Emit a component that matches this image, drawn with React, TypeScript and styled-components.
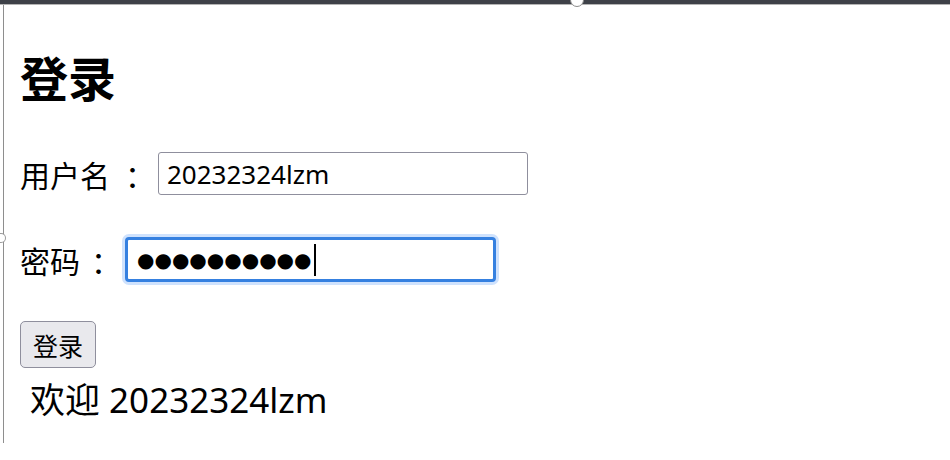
import React from "react"
import styled, { createGlobalStyle } from "styled-components"

const GlobalStyle = createGlobalStyle`
  html, body {
    margin: 0;
    padding: 0;
    background: #ffffff;
  }
  body {
    font-family: "Noto Sans", "Noto Sans CJK SC", sans-serif;
    color: #000000;
  }
`

const App = () => {
  return (
    <>
      <GlobalStyle />
      <TopBar>
        <ResizeKnob />
      </TopBar>
      <Frame>
        <SideKnob />
        <Title>登录</Title>
        <Row $top={44}>
          <Label>
            用户名<Colon $gap={15}>：</Colon>
          </Label>
          <TextBox readOnly value="20232324lzm" />
        </Row>
        <Row $top={42}>
          <Label>
            密码<Colon $gap={11}>：</Colon>
          </Label>
          <FocusBox>
            <Dots>●●●●●●●●●●</Dots>
            <Caret />
          </FocusBox>
        </Row>
        <SubmitButton type="button">登录</SubmitButton>
        <Welcome>欢迎 20232324lzm</Welcome>
      </Frame>
    </>
  )
}

export default App

const TopBar = styled.div`
  position: relative;
  height: 4px;
  background: #3e4148;
  border-bottom: 1px solid #b4b4b4;
`

const ResizeKnob = styled.div`
  position: absolute;
  left: 570px;
  top: -7px;
  width: 12px;
  height: 12px;
  border-radius: 50%;
  background: #ffffff;
  border: 1px solid #8c8c8c;
`

const Frame = styled.div`
  position: relative;
  margin-left: 3px;
  height: 438px;
  border-left: 1.5px solid #8e8e8e;
  padding-left: 16px;
  display: flex;
  flex-direction: column;
  align-items: flex-start;
`

const SideKnob = styled.div`
  position: absolute;
  left: -5px;
  top: 228px;
  width: 6px;
  height: 8px;
  border-radius: 0 5px 5px 0;
  border: 1px solid #9a9a9a;
  border-left: none;
  background: #ffffff;
`

const Title = styled.h1`
  margin: 39px 0 0 0;
  font-family: "Noto Sans CJK SC", sans-serif;
  font-size: 48px;
  font-weight: 700;
  line-height: 64px;
`

const Row = styled.div<{ $top: number }>`
  display: flex;
  align-items: center;
  margin-top: ${(p) => p.$top}px;
`

const Label = styled.span`
  display: flex;
  font-family: "Noto Sans CJK SC", sans-serif;
  font-size: 30px;
  line-height: 42px;
`

const Colon = styled.span<{ $gap: number }>`
  margin-left: ${(p) => p.$gap}px;
`

const TextBox = styled.input`
  box-sizing: border-box;
  margin-left: 3px;
  width: 370px;
  height: 43px;
  padding: 0 8px;
  border: 1.5px solid #8f8f9d;
  border-radius: 3px;
  font-family: "Noto Sans", "Noto Sans CJK SC", sans-serif;
  font-size: 26px;
  color: #000000;
  background: #ffffff;
  outline: none;
`

const FocusBox = styled.div`
  box-sizing: border-box;
  margin-left: 4px;
  width: 371px;
  height: 45px;
  padding: 0 9px;
  display: flex;
  align-items: center;
  border: 3px solid #3580e0;
  border-radius: 4px;
  box-shadow: 0 0 0 3px #cfe2fd;
  background: #ffffff;
`

const Dots = styled.span`
  font-family: "DejaVu Sans", sans-serif;
  font-size: 20px;
  letter-spacing: 0;
  color: #000000;
`

const Caret = styled.span`
  width: 2px;
  height: 32px;
  margin-left: 2px;
  background: #000000;
`

const SubmitButton = styled.button`
  margin-top: 39px;
  width: 76px;
  height: 47px;
  padding: 0;
  font-family: "Noto Sans CJK SC", sans-serif;
  font-size: 25px;
  color: #000000;
  background: #e9e9ed;
  border: 1.5px solid #8f8f9d;
  border-radius: 5px;
`

const Welcome = styled.p`
  margin: 8px 0 0 10px;
  font-family: "Noto Sans", "Noto Sans CJK SC", sans-serif;
  font-size: 35px;
  line-height: 48px;
`
